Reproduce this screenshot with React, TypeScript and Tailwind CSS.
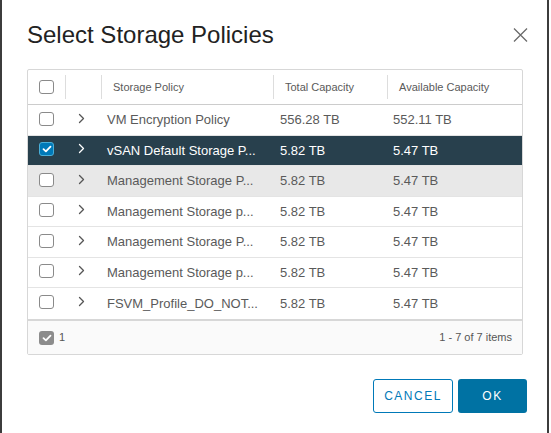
import React from "react";

const rows = [
  { name: "VM Encryption Policy", total: "556.28 TB", avail: "552.11 TB", state: "normal", h: "h-[31px]" },
  { name: "vSAN Default Storage P...", total: "5.82 TB", avail: "5.47 TB", state: "selected", h: "h-[30px]" },
  { name: "Management Storage P...", total: "5.82 TB", avail: "5.47 TB", state: "hover", h: "h-[31px]" },
  { name: "Management Storage p...", total: "5.82 TB", avail: "5.47 TB", state: "normal", h: "h-[30px]" },
  { name: "Management Storage P...", total: "5.82 TB", avail: "5.47 TB", state: "normal", h: "h-[31px]" },
  { name: "Management Storage p...", total: "5.82 TB", avail: "5.47 TB", state: "normal", h: "h-[30px]" },
  { name: "FSVM_Profile_DO_NOT...", total: "5.82 TB", avail: "5.47 TB", state: "normal", h: "h-[31px]" },
];

function Check({ color }: { color: string }) {
  return (
    <svg width="10" height="8" viewBox="0 0 10 8" fill="none">
      <path d="M1.5 4.2 L3.9 6.4 L8.5 1.6" stroke={color} strokeWidth="1.8" strokeLinecap="round" strokeLinejoin="round" />
    </svg>
  );
}

function Chevron({ color }: { color: string }) {
  return (
    <svg width="7" height="11" viewBox="0 0 7 11" fill="none">
      <path d="M1.5 1.5 L5.5 5.5 L1.5 9.5" stroke={color} strokeWidth="1.3" strokeLinecap="round" strokeLinejoin="round" />
    </svg>
  );
}

export default function App() {
  return (
    <div
      className="w-[551px] h-[433px] bg-white overflow-hidden"
      style={{ fontFamily: '"Liberation Sans", Arial, sans-serif' }}
    >
      <div className="w-[549px] h-[433px] border-l-2 border-r-2 border-[#3c3c3c] flex flex-col">
        <div className="flex items-start justify-between pl-[25px] pr-[19px] pt-[22px] h-[69px]">
          <div className="text-[24px] leading-[26px] text-[#222222]">Select Storage Policies</div>
          <svg width="15" height="14" viewBox="0 0 15 14" className="mt-[6px]">
            <path d="M1 0.5 L14 13.5 M14 0.5 L1 13.5" stroke="#6b6b6b" strokeWidth="1.3" />
          </svg>
        </div>

        <div className="ml-[25px] w-[496px] border border-[#d7d7d7] rounded-[2px] flex flex-col text-[#5a5a5a]">
          <div className="grid grid-cols-[37px_36px_172px_114px_135px] h-[35px] border-b border-[#cccccc] items-center text-[11px]">
            <div className="flex items-center pl-[11px]">
              <div className="w-[15px] h-[14px] rounded-[3px] border border-[#8a8a8a] bg-white" />
            </div>
            <div className="h-[24px] border-l border-[#dddddd]" />
            <div className="h-[24px] border-l border-[#dddddd] pl-[11px] flex items-center">Storage Policy</div>
            <div className="h-[24px] border-l border-[#dddddd] pl-[11px] flex items-center">Total Capacity</div>
            <div className="h-[24px] border-l border-[#dddddd] pl-[11px] flex items-center">Available Capacity</div>
          </div>

          {rows.map((r, i) => {
            const sel = r.state === "selected";
            const bg = sel ? "bg-[#28404d] text-white" : r.state === "hover" ? "bg-[#e8e8e8]" : "bg-white";
            return (
              <div
                key={i}
                className={`grid grid-cols-[37px_36px_172px_114px_135px] ${r.h} items-center text-[13px] ${bg} ${
                  i < rows.length - 1 ? "border-b border-[#e4e4e4]" : ""
                }`}
              >
                <div className="flex items-center pl-[11px] -mt-[3px]">
                  {sel ? (
                    <div className="w-[15px] h-[14px] rounded-[3px] border border-[#49afd9] bg-[#0079b8] flex items-center justify-center">
                      <Check color="#ffffff" />
                    </div>
                  ) : (
                    <div className="w-[15px] h-[14px] rounded-[3px] border border-[#8a8a8a] bg-white" />
                  )}
                </div>
                <div className="flex items-center pl-[13px] -mt-[4px]">
                  <Chevron color={sel ? "#ffffff" : "#565656"} />
                </div>
                <div className="pl-[6px] whitespace-nowrap">{r.name}</div>
                <div className="pl-[7px] whitespace-nowrap">{r.total}</div>
                <div className="pl-[6px] whitespace-nowrap">{r.avail}</div>
              </div>
            );
          })}

          <div className="h-[35px] border-t-2 border-[#d7d7d7] bg-[#fafafa] flex items-center justify-between pl-[11px] pr-[10px]">
            <div className="flex items-center gap-[5px]">
              <div className="w-[15px] h-[14px] rounded-[3px] bg-[#8c8c8c] flex items-center justify-center">
                <Check color="#ffffff" />
              </div>
              <span className="text-[11px] text-[#565656]">1</span>
            </div>
            <span className="text-[11px] text-[#565656]">1 - 7 of 7 items</span>
          </div>
        </div>

        <div className="flex justify-end gap-[5px] mt-[24px] pr-[20px]">
          <button className="w-[80px] h-[34px] rounded-[3px] border border-[#0079b8] bg-white text-[#0079b8] text-[12px] tracking-[1.5px]">
            CANCEL
          </button>
          <button className="w-[69px] h-[34px] rounded-[3px] bg-[#0072a3] text-white text-[12px] tracking-[1.5px]">
            OK
          </button>
        </div>
      </div>
    </div>
  );
}
